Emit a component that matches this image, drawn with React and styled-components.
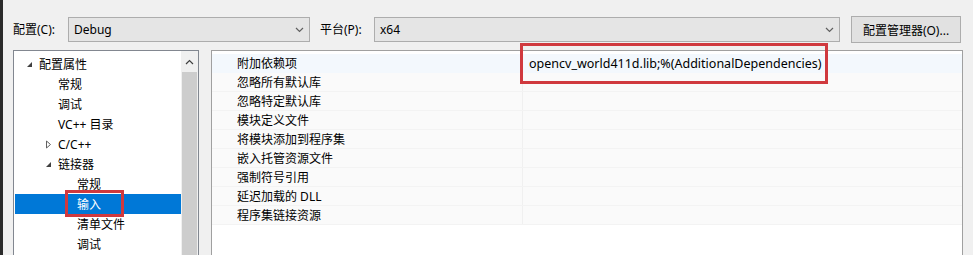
import React from "react";
import styled, { createGlobalStyle, css } from "styled-components";

const GlobalStyle = createGlobalStyle`
  html, body { margin: 0; padding: 0; background: #f0f0f0; }
  body {
    font-family: "Segoe UI", "Noto Sans", "Noto Sans CJK SC", sans-serif;
    font-size: 12px;
    color: #000;
  }
  #root { width: 973px; height: 255px; overflow: hidden; }
`;

const Window = styled.div`
  box-sizing: border-box;
  width: 973px;
  height: 255px;
  overflow: hidden;
  border-left: 3px solid #2b2b2b;
  background: #f0f0f0;
  display: flex;
  flex-direction: column;
  padding: 16px 0 0 10px;
`;

const TopBar = styled.div`
  display: flex;
  align-items: center;
  height: 27px;
`;

const Label = styled.div`
  width: ${(p) => p.$w}px;
  margin-left: ${(p) => p.$ml || 0}px;
  font-family: "Noto Sans", "Noto Sans CJK SC", sans-serif;
  white-space: nowrap;
  line-height: 27px;
`;

const Select = styled.div`
  box-sizing: border-box;
  height: 25px;
  width: ${(p) => p.$w}px;
  border: 1px solid #adadad;
  background: #e5e5e5;
  display: flex;
  align-items: center;
  padding: 0 5px 0 5px;
  font-family: "Noto Sans", sans-serif;
  font-size: 12px;
`;

const SelectText = styled.span`
  flex: 1;
`;

const Button = styled.div`
  box-sizing: border-box;
  height: 27px;
  width: 110px;
  margin-left: 11px;
  border: 1px solid #adadad;
  background: #e1e1e1;
  display: flex;
  align-items: center;
  justify-content: center;
  font-family: "Noto Sans", "Noto Sans CJK SC", sans-serif;
`;

const Main = styled.div`
  display: flex;
  margin-top: 7px;
  flex: 1;
`;

const TreePanel = styled.div`
  box-sizing: border-box;
  width: 186px;
  height: 220px;
  border: 1px solid #828790;
  border-bottom: none;
  background: #fff;
  display: flex;
`;

const TreeList = styled.div`
  flex: 1;
  padding: 3px 0 0 1px;
  font-family: "Noto Sans", "Noto Sans CJK SC", sans-serif;
`;

const TreeRow = styled.div`
  position: relative;
  height: 20px;
  display: flex;
  align-items: center;
  padding-left: ${(p) => 11 + p.$level * 19}px;
  white-space: nowrap;
  ${(p) =>
    p.$selected &&
    css`
      background: #0078d7;
      color: #fff;
    `}
`;

const Expander = styled.span`
  width: 13px;
  height: 20px;
  display: flex;
  align-items: center;
`;

const Marked = styled.span`
  position: relative;
  display: inline-flex;
  align-items: center;
  height: 20px;
  &::after {
    content: "";
    position: absolute;
    left: -12px;
    right: -23px;
    top: -4px;
    bottom: -3px;
    border: 3px solid #d0393e;
  }
`;

const ScrollBar = styled.div`
  width: 17px;
  background: #f0f0f0;
  display: flex;
  flex-direction: column;
  align-items: center;
`;

const ScrollButton = styled.div`
  height: 21px;
  width: 17px;
  display: flex;
  align-items: center;
  justify-content: center;
`;

const Thumb = styled.div`
  width: 15px;
  flex: 1;
  background: #cdcdcd;
`;

const GridPanel = styled.div`
  box-sizing: border-box;
  width: 752px;
  height: 220px;
  margin-left: 12px;
  border: 1px solid #a0a0a0;
  border-bottom: none;
  background: #fff;
  padding-top: 3px;
`;

const GridRow = styled.div`
  display: grid;
  grid-template-columns: 311px 1fr;
  height: 19px;
  background: ${(p) => (p.$first ? "#f3f8fd" : "#fafafa")};
  border-bottom: 1px solid ${(p) => (p.$first ? "#f3f8fd" : "#f3f3f3")};
  box-sizing: border-box;
`;

const NameCell = styled.div`
  padding-left: 25px;
  display: flex;
  align-items: center;
  font-family: "Noto Sans", "Noto Sans CJK SC", sans-serif;
  border-right: 1px solid #f0f0f0;
  white-space: nowrap;
`;

const ValueCell = styled.div`
  position: relative;
  padding-left: 6px;
  display: flex;
  align-items: center;
  font-family: "Noto Sans", sans-serif;
  font-size: 12.5px;
  white-space: nowrap;
`;

const Callout = styled.div`
  position: absolute;
  left: -3px;
  top: -11px;
  width: 308px;
  height: 41px;
  box-sizing: border-box;
  border: 3px solid #d0393e;
  pointer-events: none;
`;

const Chevron = ({ up }) => (
  <svg width="9" height="6" viewBox="0 0 9 6">
    <path
      d={up ? "M1 5 L4.5 1.5 L8 5" : "M1 1 L4.5 4.5 L8 1"}
      fill="none"
      stroke={up ? "#404040" : "#606060"}
      strokeWidth="1.2"
    />
  </svg>
);

const ExpandedIcon = () => (
  <svg width="7" height="7" viewBox="0 0 7 7">
    <polygon points="6,1 6,6 1,6" fill="#404040" />
  </svg>
);

const CollapsedIcon = () => (
  <svg width="7" height="9" viewBox="0 0 7 9">
    <polygon points="1.5,1 5.5,4.5 1.5,8" fill="none" stroke="#606060" strokeWidth="1" />
  </svg>
);

const tree = [
  { label: "配置属性", level: 0, exp: "open" },
  { label: "常规", level: 1 },
  { label: "调试", level: 1 },
  { label: "VC++ 目录", level: 1 },
  { label: "C/C++", level: 1, exp: "closed" },
  { label: "链接器", level: 1, exp: "open" },
  { label: "常规", level: 2 },
  { label: "输入", level: 2, selected: true },
  { label: "清单文件", level: 2 },
  { label: "调试", level: 2 },
];

const props = [
  "附加依赖项",
  "忽略所有默认库",
  "忽略特定默认库",
  "模块定义文件",
  "将模块添加到程序集",
  "嵌入托管资源文件",
  "强制符号引用",
  "延迟加载的 DLL",
  "程序集链接资源",
];

export default function App() {
  return (
    <>
      <GlobalStyle />
      <Window>
        <TopBar>
          <Label $w={55}>配置(C):</Label>
          <Select $w={242}>
            <SelectText>Debug</SelectText>
            <Chevron />
          </Select>
          <Label $w={54} $ml={10}>平台(P):</Label>
          <Select $w={466}>
            <SelectText>x64</SelectText>
            <Chevron />
          </Select>
          <Button>配置管理器(O)...</Button>
        </TopBar>
        <Main>
          <TreePanel>
            <TreeList>
              {tree.map((t, i) => (
                <TreeRow key={i} $level={t.level} $selected={t.selected}>
                  <Expander>
                    {t.exp === "open" && <ExpandedIcon />}
                    {t.exp === "closed" && <CollapsedIcon />}
                  </Expander>
                  {t.selected ? <Marked>{t.label}</Marked> : t.label}
                </TreeRow>
              ))}
            </TreeList>
            <ScrollBar>
              <ScrollButton>
                <Chevron up />
              </ScrollButton>
              <Thumb />
            </ScrollBar>
          </TreePanel>
          <GridPanel>
            {props.map((p, i) => (
              <GridRow key={i} $first={i === 0}>
                <NameCell>{p}</NameCell>
                <ValueCell>
                  {i === 0 && (
                    <>
                      opencv_world411d.lib;%(AdditionalDependencies)
                      <Callout />
                    </>
                  )}
                </ValueCell>
              </GridRow>
            ))}
          </GridPanel>
        </Main>
      </Window>
    </>
  );
}
